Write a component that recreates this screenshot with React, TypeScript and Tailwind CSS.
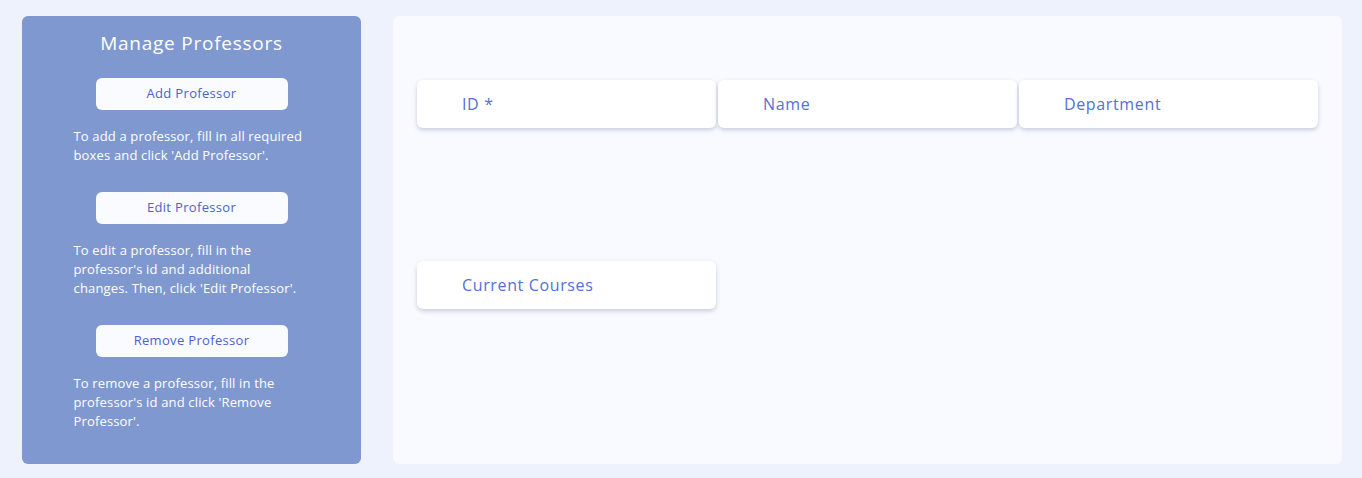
import React from "react";

const font = { fontFamily: '"Open Sans", "Liberation Sans", sans-serif' };

const actions = [
  {
    label: "Add Professor",
    help: "To add a professor, fill in all required boxes and click 'Add Professor'.",
  },
  {
    label: "Edit Professor",
    help: "To edit a professor, fill in the professor's id and additional changes. Then, click 'Edit Professor'.",
  },
  {
    label: "Remove Professor",
    help: "To remove a professor, fill in the professor's id and click 'Remove Professor'.",
  },
];

function Field({ label }: { label: string }) {
  return (
    <div className="flex h-12 w-[299px] items-center rounded-md bg-white pl-[45px] text-[16px] tracking-[0.04em] text-[#5470d6] shadow-[0_2px_4px_rgba(60,70,110,0.25)]">
      {label}
    </div>
  );
}

export default function App() {
  return (
    <div style={font} className="flex h-[478px] w-full gap-8 bg-[#edf2fd] px-[22px] pt-4 pb-[14px]">
      <aside className="flex w-[339px] shrink-0 flex-col items-center rounded-md bg-[#7f98d0] pt-[13px] text-white">
        <h1 className="text-[19px] leading-7 tracking-[0.04em]">Manage Professors</h1>
        <div className="mt-[21px] flex flex-col items-center">
          {actions.map((a) => (
            <div key={a.label} className="mb-[27px] flex flex-col items-center">
              <button className="h-8 w-48 rounded-md bg-[#fafbff] text-[13px] tracking-[0.025em] text-[#4a62d0]">
                {a.label}
              </button>
              <p className="mt-[17px] w-[236px] pr-[5px] text-[13px] leading-[19px] tracking-[0.012em]">{a.help}</p>
            </div>
          ))}
        </div>
      </aside>
      <main className="flex flex-1 flex-col gap-[133px] rounded-md bg-[#f8faff] px-6 pt-16">
        <div className="flex gap-[2px]">
          <Field label="ID *" />
          <Field label="Name" />
          <Field label="Department" />
        </div>
        <div className="flex">
          <Field label="Current Courses" />
        </div>
      </main>
    </div>
  );
}
